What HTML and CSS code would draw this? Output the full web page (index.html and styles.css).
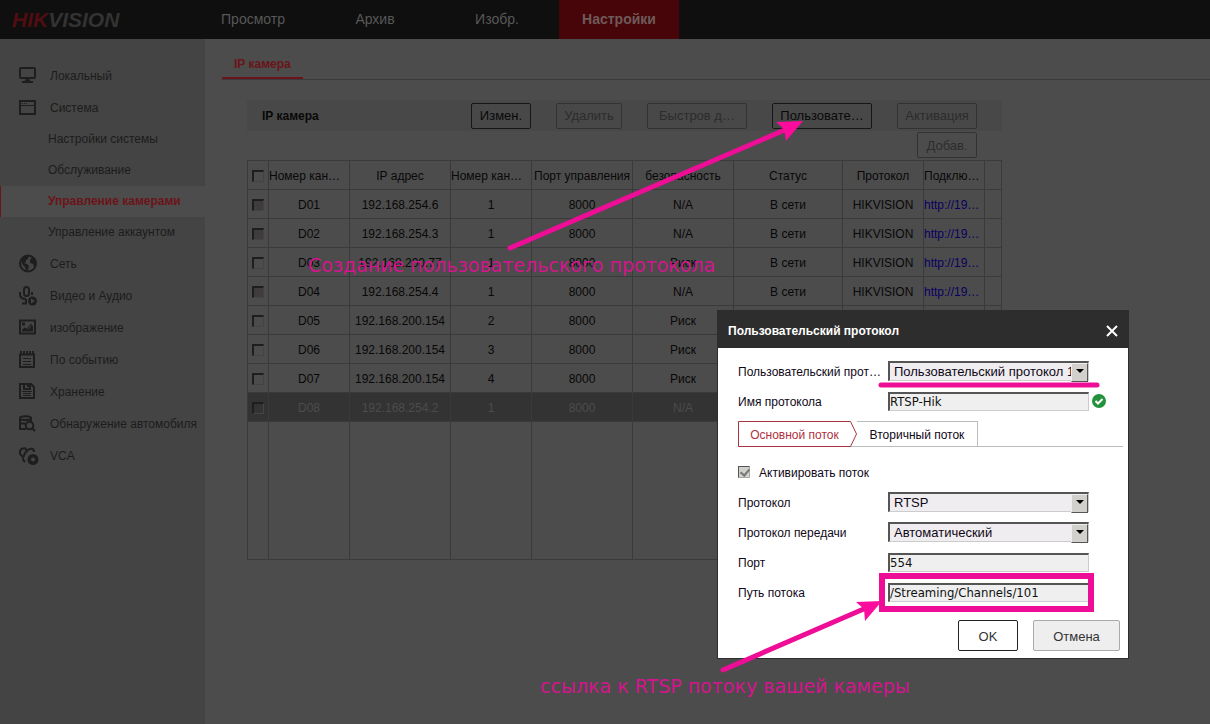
FILE: index.html
```html
<!DOCTYPE html>
<html lang="ru">
<head>
    <title>HIKVISION - Настройки</title>
    <meta charset="utf-8">
    <meta name="viewport" content="width=device-width, initial-scale=1">
    <link rel="stylesheet" href="styles.css">
</head>
<body>
    <header class="header">
        <div class="logo"><span>HIK</span>VISION</div>
        <nav class="topnav">
            <a href="#">Просмотр</a>
            <a href="#">Архив</a>
            <a href="#">Изобр.</a>
            <a href="#" class="active">Настройки</a>
        </nav>
    </header>

    <div class="page">
        <aside class="sidebar">
            <a href="#" class="item">
                <svg class="icon" viewBox="0 0 18 18"><rect x="1" y="1" width="15" height="10" rx="1"/><path d="M8.500 11v3M3 15h11M6 13.500h5"/></svg>
                Локальный
            </a>
            <a href="#" class="item">
                <svg class="icon" viewBox="0 0 18 18"><rect x="1" y="2" width="15" height="13"/><path class="thin" d="M1 6.500h15"/><path class="thin" d="M3 4.500h1M5 4.500h1M7 4.500h1"/></svg>
                Система
            </a>
            <a href="#" class="subitem">Настройки системы</a>
            <a href="#" class="subitem">Обслуживание</a>
            <a href="#" class="subitem active">Управление камерами</a>
            <a href="#" class="subitem">Управление аккаунтом</a>
            <a href="#" class="item">
                <svg class="icon" viewBox="0 0 18 18"><circle cx="9" cy="8.500" r="8"/><path class="fill" d="M2 5l3-3 5-1-1 3-2 1v2l-2 1 3 1 2 2-1 4-2 1-1-4-3-3zM11 5l2-3 3 3 1 4-2 3-1-3-3-1z"/></svg>
                Сеть
            </a>
            <a href="#" class="item">
                <svg class="icon" viewBox="0 0 18 18"><rect x="5" y="0" width="5" height="9" rx="2.500"/><path d="M1 5v2c0 3 2 5 6 5M13 5v3M7 12v4M3 16.500h5"/><circle class="fill" cx="13.500" cy="14" r="4.500"/><path class="hole" d="M12 11.500l4 2.500-4 2.500z"/></svg>
                Видео и Аудио
            </a>
            <a href="#" class="item">
                <svg class="icon" viewBox="0 0 18 18"><rect x="1" y="1.500" width="15" height="13"/><path class="fill" d="M3 12.500v-2l3-2 2 1 4-5 2 3v5zM3 3.500h3v3H3z"/><path class="slit" d="M9 10.500l3-4"/></svg>
                изображение
            </a>
            <a href="#" class="item">
                <svg class="icon" viewBox="0 0 18 18"><path d="M1 3v13h14V3M0 3.500h16"/><path d="M2 0v3M5 0v3M8 0v3M11 0v3M14 0v3"/><path class="thin" d="M4 7.500h8M4 10.500h8M4 13.500h8"/></svg>
                По событию
            </a>
            <a href="#" class="item">
                <svg class="icon" viewBox="0 0 18 18"><path d="M1 1h11l3 3v11H1z"/><path d="M5 1v5h6V1M9 2v2"/><path class="thin" d="M3 8.500h10M4 10.500h8M4 12.500h8"/></svg>
                Хранение
            </a>
            <a href="#" class="item">
                <svg class="icon" viewBox="0 0 18 18"><path d="M1 3c0-2.500 11-2.500 11 0s-11 2.500-11 0v11h6M12 3v3M1 8.500h5"/><circle cx="10.500" cy="10.500" r="3.800"/><path d="M13 13l3 3"/></svg>
                Обнаружение автомобиля
            </a>
            <a href="#" class="item">
                <svg class="icon" viewBox="0 0 18 18"><path d="M4 1C0 3 0 7 3 9s-1 3 3 6M4 2c3-2 4 1 3 3S4 8 5 10M15 5c0-4-4-4-6-2L5 7"/><circle class="fill" cx="14" cy="12.500" r="5.500"/><circle class="hole" cx="14" cy="12.500" r="2"/></svg>
                VCA
            </a>
        </aside>

        <main class="content">
            <div class="tabs">
                <a href="#" class="tab">IP камера</a>
            </div>

            <div class="panel">
                <div class="toolbar">
                    <h2>IP камера</h2>
                    <button class="btn small">Измен.</button>
                    <button class="btn middle" disabled>Удалить</button>
                    <button class="btn wide" disabled>Быстров д…</button>
                    <button class="btn wide">Пользовате…</button>
                    <button class="btn large" disabled>Активация</button>
                </div>
                <div class="toolbar-more">
                    <button class="btn small" disabled>Добав.</button>
                </div>

                <table class="cameras">
                    <colgroup>
                        <col class="c-check"><col class="c-num"><col class="c-ip"><col class="c-num"><col class="c-ip">
                        <col class="c-ip"><col class="c-status"><col class="c-num"><col class="c-link"><col class="c-last">
                    </colgroup>
                    <thead>
                        <tr>
                            <th><input type="checkbox" aria-label="Выбрать все"></th>
                            <th class="cut">Номер кан…</th>
                            <th>IP адрес</th>
                            <th class="cut">Номер кан…</th>
                            <th>Порт управления</th>
                            <th>безопасность</th>
                            <th>Статус</th>
                            <th>Протокол</th>
                            <th class="cut">Подклю…</th>
                            <th></th>
                        </tr>
                    </thead>
                    <tbody>
                        <tr><td><input type="checkbox" aria-label="D01" disabled></td><td>D01</td><td>192.168.254.6</td><td>1</td><td>8000</td><td>N/A</td><td>В сети</td><td>HIKVISION</td><td class="cut"><a href="#">http://19…</a></td><td></td></tr>
                        <tr><td><input type="checkbox" aria-label="D02" disabled></td><td>D02</td><td>192.168.254.3</td><td>1</td><td>8000</td><td>N/A</td><td>В сети</td><td>HIKVISION</td><td class="cut"><a href="#">http://19…</a></td><td></td></tr>
                        <tr><td><input type="checkbox" aria-label="D03"></td><td>D03</td><td>192.168.200.77</td><td>1</td><td>8000</td><td>Риск</td><td>В сети</td><td>HIKVISION</td><td class="cut"><a href="#">http://19…</a></td><td></td></tr>
                        <tr><td><input type="checkbox" aria-label="D04" disabled></td><td>D04</td><td>192.168.254.4</td><td>1</td><td>8000</td><td>N/A</td><td>В сети</td><td>HIKVISION</td><td class="cut"><a href="#">http://19…</a></td><td></td></tr>
                        <tr><td><input type="checkbox" aria-label="D05"></td><td>D05</td><td>192.168.200.154</td><td>2</td><td>8000</td><td>Риск</td><td></td><td></td><td></td><td></td></tr>
                        <tr><td><input type="checkbox" aria-label="D06"></td><td>D06</td><td>192.168.200.154</td><td>3</td><td>8000</td><td>Риск</td><td></td><td></td><td></td><td></td></tr>
                        <tr><td><input type="checkbox" aria-label="D07"></td><td>D07</td><td>192.168.200.154</td><td>4</td><td>8000</td><td>Риск</td><td></td><td></td><td></td><td></td></tr>
                        <tr class="selected"><td><input type="checkbox" aria-label="D08"></td><td>D08</td><td>192.168.254.2</td><td>1</td><td>8000</td><td>N/A</td><td></td><td></td><td></td><td></td></tr>
                        <tr class="empty"><td></td><td></td><td></td><td></td><td></td><td></td><td></td><td></td><td></td><td></td></tr>
                    </tbody>
                </table>
            </div>
        </main>
    </div>

    <section class="dialog" role="dialog" aria-labelledby="dialog-title">
        <div class="dialog-header">
            <h2 id="dialog-title">Пользовательский протокол</h2>
            <button class="close" aria-label="Закрыть">
                <svg viewBox="0 0 12 12"><path d="M1 1l10 10M11 1L1 11"/></svg>
            </button>
        </div>
        <form class="dialog-body">
            <div class="row">
                <label for="custom">Пользовательский прот…</label>
                <div class="select"><select id="custom"><option>Пользовательский протокол 1</option></select></div>
            </div>
            <div class="row">
                <label for="name">Имя протокола</label>
                <input class="text" type="text" id="name" value="RTSP-Hik">
                <svg class="ok-mark" viewBox="0 0 14 14"><circle cx="7" cy="7" r="7"/><path d="M3.500 7l2.500 2.500 4.500-4.500"/></svg>
            </div>
            <div class="streams">
                <button type="button" class="stream active">
                    <svg viewBox="0 0 119 26"><path d="M.5.5h112l6 12.500-6 12.500H.5z"/></svg>
                    <span>Основной поток</span>
                </button>
                <button type="button" class="stream">Вторичный поток</button>
            </div>
            <div class="row">
                <input class="tick" type="checkbox" id="enable" checked>
                <label class="tick-label" for="enable">Активировать поток</label>
            </div>
            <div class="row">
                <label for="protocol">Протокол</label>
                <div class="select"><select id="protocol"><option>RTSP</option></select></div>
            </div>
            <div class="row">
                <label for="transfer">Протокол передачи</label>
                <div class="select"><select id="transfer"><option>Автоматический</option></select></div>
            </div>
            <div class="row">
                <label for="port">Порт</label>
                <input class="text" type="text" id="port" value="554">
            </div>
            <div class="row">
                <label for="path">Путь потока</label>
                <input class="text" type="text" id="path" value="/Streaming/Channels/101">
            </div>
            <div class="actions">
                <button type="button" class="action ok">OK</button>
                <button type="button" class="action cancel">Отмена</button>
            </div>
        </form>
    </section>

    <!-- Пояснения поверх страницы -->
    <svg class="notes" width="1210" height="724" viewBox="0 0 1210 724">
        <path class="line" d="M510 248L787 129"/>
        <path class="head" d="M803 121l-27 1 8 7 2 12z"/>
        <text x="308" y="272">Создание пользовательского протокола</text>
        <path class="line" d="M881 385h216"/>
        <rect class="line square" x="882" y="576" width="209" height="33"/>
        <path class="line" d="M723 670L866 608"/>
        <path class="head" d="M882 601l-26 1 8 7 1 12z"/>
        <text x="540" y="693">ссылка к RTSP потоку вашей камеры</text>
    </svg>
</body>
</html>
```
FILE: styles.css
```css
* {
    box-sizing: border-box;
}

body {
    margin: 0;
    min-height: 100vh;
    display: flex;
    flex-direction: column;
    position: relative;
    background-color: #4c4c4c;
    color: #080808;
    font-family: "Liberation Sans", Arial, sans-serif;
    font-size: 12px;
}

a {
    color: inherit;
    text-decoration: none;
}

h2 {
    margin: 0;
    font-size: 12px;
}

button, input, select {
    font-family: inherit;
    font-size: inherit;
    margin: 0;
}

.header {
    display: flex;
    height: 39px;
    background-color: #0f0f0f;
}

.logo {
    width: 192px;
    padding-left: 12px;
    line-height: 39px;
    font-size: 21px;
    font-weight: bold;
    font-style: italic;
    color: #333;
}

.logo span {
    color: #500d12;
}

.topnav {
    display: flex;
}

.topnav a {
    width: 122px;
    line-height: 39px;
    text-align: center;
    font-size: 14px;
    color: #585858;
}

.topnav .active {
    width: 120px;
    margin-left: 1px;
    background-color: #470509;
    color: #6e5a5a;
    font-weight: bold;
}

.page {
    display: flex;
    flex: 1;
}

.sidebar {
    width: 205px;
    flex-shrink: 0;
    padding-top: 21px;
    background-color: #444;
    color: #1c1c1c;
}

.item {
    display: flex;
    align-items: center;
    gap: 13px;
    height: 32px;
    padding-left: 19px;
    white-space: nowrap;
}

.icon {
    width: 18px;
    height: 18px;
    flex-shrink: 0;
    overflow: visible;
    fill: none;
    stroke: #1e1e1e;
    stroke-width: 2;
}

.icon .thin {
    stroke-width: 1;
}

.icon .fill {
    fill: #1e1e1e;
    stroke: none;
}

.icon .hole {
    fill: #444;
    stroke: none;
}

.icon .slit {
    stroke: #444;
    stroke-width: 1;
}

.subitem {
    display: block;
    height: 31px;
    line-height: 31px;
    padding-left: 48px;
}

.subitem.active {
    padding-left: 47px;
    border-left: 1px solid #6b1419;
    background-color: #4c4c4c;
    color: #6b1419;
    font-weight: bold;
}

.content {
    flex: 1;
    min-width: 0;
    padding-left: 17px;
}

.tabs {
    display: flex;
    height: 41px;
    align-items: flex-end;
    border-bottom: 1px solid #3a3a3a;
}

.tab {
    height: 30px;
    line-height: 30px;
    padding: 0 12px;
    border-bottom: 2px solid #6b1419;
    color: #6b1419;
    font-weight: bold;
}

.panel {
    max-width: 780px;
    padding: 20px 0 0 25px;
}

.toolbar {
    display: flex;
    align-items: center;
    gap: 25px;
    height: 31px;
    padding: 0 25px 0 15px;
    background-color: #484848;
}

.toolbar h2 {
    flex: 1;
}

.toolbar-more {
    display: flex;
    justify-content: flex-end;
    padding: 1px 25px 2px;
}

.btn {
    height: 26px;
    padding: 0;
    border: 1px solid #161616;
    border-radius: 2px;
    background-color: transparent;
    color: #080808;
    font-size: 13px;
}

.btn:disabled {
    border-color: #323232;
    color: #2c2c2c;
}

.btn.small {
    width: 60px;
}

.btn.middle {
    width: 66px;
}

.btn.large {
    width: 80px;
}

.btn.wide {
    width: 100px;
}

.cameras {
    width: 100%;
    table-layout: fixed;
    border-collapse: collapse;
}

.c-check {
    width: 21px;
}

.c-num {
    width: 81px;
}

.c-ip {
    width: 101px;
}

.c-status {
    width: 109px;
}

.c-link {
    width: 61px;
}

.c-last {
    width: 17px;
}

.cameras th, .cameras td {
    height: 29px;
    padding: 2px 0 0;
    border: 1px solid #3a3a3a;
    text-align: center;
    font-weight: normal;
    white-space: nowrap;
}

.cameras .cut {
    text-align: left;
}

.cameras td a {
    color: #0a0060;
}

.cameras input {
    display: block;
    appearance: none;
    width: 12px;
    height: 12px;
    margin: 0 auto;
    border: 2px solid;
    border-width: 2px 1px 1px 2px;
    border-color: #1e1e1e #444 #444 #1e1e1e;
}

.cameras input:disabled {
    background-color: #3e3d3b;
}

.cameras .selected td {
    background-color: #333;
    color: #4c4c4c;
}

.cameras .empty td {
    height: 138px;
}

.dialog {
    position: absolute;
    left: 717px;
    top: 310px;
    width: 412px;
    border: 1px solid #2d2d2d;
    background-color: #fff;
    color: #100818;
}

.dialog-header {
    display: flex;
    align-items: center;
    justify-content: space-between;
    height: 37px;
    padding: 2px 10px 0;
    background-color: #2d2d2d;
    color: #fff;
}

.close {
    display: flex;
    padding: 0;
    border: none;
    background: none;
}

.close svg {
    width: 12px;
    height: 12px;
    fill: none;
    stroke: #fff;
    stroke-width: 2;
}

.dialog-body {
    padding: 8px 8px 7px 20px;
}

.row {
    display: flex;
    align-items: center;
    height: 30px;
}

.row label {
    width: 150px;
    padding-top: 1px;
    white-space: nowrap;
}

.select {
    position: relative;
    width: 201px;
}

.select select {
    appearance: none;
    display: block;
    width: 100%;
    height: 20px;
    padding: 0 0 0 4px;
    border: 2px solid;
    border-width: 2px 1px 1px 2px;
    border-color: #555 #ccc #ccc #555;
    border-radius: 0;
    background-color: #efedef;
    color: #100818;
    font-size: 13px;
}

.select::before {
    content: "";
    position: absolute;
    right: 1px;
    top: 2px;
    width: 15px;
    height: 17px;
    border: 1px solid;
    border-color: #eee #555 #555 #eee;
    background-color: #d2d0cc;
    pointer-events: none;
}

.select::after {
    content: "";
    position: absolute;
    right: 5px;
    top: 8px;
    border: 4px solid transparent;
    border-top-color: #000;
    border-bottom: none;
    pointer-events: none;
}

.text {
    width: 201px;
    height: 19px;
    padding: 0;
    border: 2px solid;
    border-width: 2px 1px 1px 2px;
    border-color: #555 #ccc #ccc #555;
    background-color: #efefef;
    color: #111;
    font-family: "DejaVu Sans Condensed", Tahoma, sans-serif;
    font-size: 13px;
}

.ok-mark {
    width: 14px;
    height: 14px;
    margin-left: 3px;
    fill: #23923a;
}

.ok-mark path {
    fill: none;
    stroke: #fff;
    stroke-width: 2;
}

.streams {
    display: flex;
    height: 26px;
    margin: 5px -3px 10px 0;
    border-bottom: 1px solid #bbb;
}

.stream {
    height: 26px;
    width: 121px;
    padding: 2px 0 0;
    border: 1px solid #bbb;
    border-left: none;
    background: none;
    color: #100818;
}

.stream.active {
    display: grid;
    width: 119px;
    padding: 0;
    border: none;
    color: #b03040;
}

.stream.active svg, .stream.active span {
    grid-area: 1 / 1;
}

.stream.active span {
    align-self: center;
    padding: 2px 6px 0 0;
}

.stream.active svg {
    width: 119px;
    height: 26px;
    fill: #fff;
    stroke: #a83440;
}

.tick {
    appearance: none;
    width: 12px;
    height: 12px;
    border: 1px solid;
    border-color: #555 #aaa #aaa #555;
    background: #d2d0cc;
}

.tick:checked::before {
    content: "";
    display: block;
    width: 4px;
    height: 7px;
    margin: 0 3px;
    border: solid #777;
    border-width: 0 2px 2px 0;
    transform: rotate(40deg);
}

.row .tick-label {
    padding-left: 9px;
}

.actions {
    display: flex;
    justify-content: flex-end;
    gap: 15px;
    margin-top: 13px;
}

.action {
    width: 60px;
    height: 31px;
    padding: 2px 0 0;
    border: 1px solid #222;
    border-radius: 2px;
    background-color: #fff;
    color: #333;
    font-size: 13px;
}

.action.cancel {
    width: 87px;
    border-color: #aaa;
    background-color: #eee;
}

.notes {
    position: absolute;
    left: 0;
    top: 0;
    pointer-events: none;
    font-family: "DejaVu Sans", Verdana, sans-serif;
    font-size: 19px;
    fill: #d4148c;
}

.notes .line {
    fill: none;
    stroke: #ee0d96;
    stroke-width: 5;
    stroke-linecap: round;
}

.notes .square {
    stroke-width: 6;
}

.notes .head {
    fill: #fb0c9c;
}
```
